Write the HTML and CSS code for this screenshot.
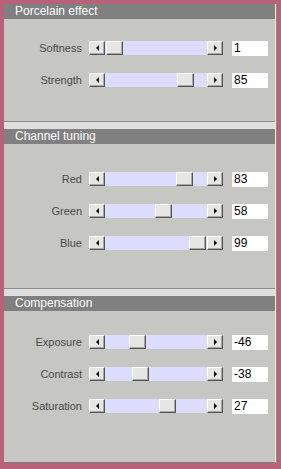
FILE: index.html
```html
<!DOCTYPE html>
<html lang="en">
<head>
    <meta charset="UTF-8">
    <meta name="viewport" content="width=device-width, initial-scale=1.0">
    <title>Porcelain Settings</title>
    <link rel="stylesheet" href="styles.css">
</head>
<body>
    <div class="panel">
        <div class="section first">
            <div class="section-head">Porcelain effect</div>
            <div class="section-body">
                <div class="row">
                    <span class="label">Softness</span>
                    <div class="slider">
                        <span class="btn btn-left"><i></i></span>
                        <span class="track"><span class="thumb" style="left: 1px"></span></span>
                        <span class="btn btn-right"><i></i></span>
                    </div>
                    <input class="value" type="text" value="1">
                </div>
                <div class="row">
                    <span class="label">Strength</span>
                    <div class="slider">
                        <span class="btn btn-left"><i></i></span>
                        <span class="track"><span class="thumb" style="left: 72px"></span></span>
                        <span class="btn btn-right"><i></i></span>
                    </div>
                    <input class="value" type="text" value="85">
                </div>
            </div>
        </div>

        <div class="section second">
            <div class="section-head">Channel tuning</div>
            <div class="section-body">
                <div class="row">
                    <span class="label">Red</span>
                    <div class="slider">
                        <span class="btn btn-left"><i></i></span>
                        <span class="track"><span class="thumb" style="left: 71px"></span></span>
                        <span class="btn btn-right"><i></i></span>
                    </div>
                    <input class="value" type="text" value="83">
                </div>
                <div class="row">
                    <span class="label">Green</span>
                    <div class="slider">
                        <span class="btn btn-left"><i></i></span>
                        <span class="track"><span class="thumb" style="left: 50px"></span></span>
                        <span class="btn btn-right"><i></i></span>
                    </div>
                    <input class="value" type="text" value="58">
                </div>
                <div class="row">
                    <span class="label">Blue</span>
                    <div class="slider">
                        <span class="btn btn-left"><i></i></span>
                        <span class="track"><span class="thumb" style="left: 84px"></span></span>
                        <span class="btn btn-right"><i></i></span>
                    </div>
                    <input class="value" type="text" value="99">
                </div>
            </div>
        </div>

        <div class="section third">
            <div class="section-head">Compensation</div>
            <div class="section-body">
                <div class="row">
                    <span class="label">Exposure</span>
                    <div class="slider">
                        <span class="btn btn-left"><i></i></span>
                        <span class="track"><span class="thumb" style="left: 24px"></span></span>
                        <span class="btn btn-right"><i></i></span>
                    </div>
                    <input class="value" type="text" value="-46">
                </div>
                <div class="row">
                    <span class="label">Contrast</span>
                    <div class="slider">
                        <span class="btn btn-left"><i></i></span>
                        <span class="track"><span class="thumb" style="left: 27px"></span></span>
                        <span class="btn btn-right"><i></i></span>
                    </div>
                    <input class="value" type="text" value="-38">
                </div>
                <div class="row">
                    <span class="label">Saturation</span>
                    <div class="slider">
                        <span class="btn btn-left"><i></i></span>
                        <span class="track"><span class="thumb" style="left: 54px"></span></span>
                        <span class="btn btn-right"><i></i></span>
                    </div>
                    <input class="value" type="text" value="27">
                </div>
            </div>
        </div>
    </div>
</body>
</html>
```

FILE: styles.css
```css
/* settings panel on a pink frame */
body {
    margin: 0;
    padding: 4px 5px 6px 4px;
    background-color: #b8627a;
    font-family: "Liberation Sans", Arial, sans-serif;
}

.panel {
    box-sizing: border-box;
    width: 272px;
    height: 459px;
    background-color: #c6c6c2;
    border-right: 1px solid #e4ece4;
    border-bottom: 1px solid #7c7c7c;
    box-shadow: 1px 0 0 #8a8a8a;
    display: flex;
    flex-direction: column;
}

.section-head {
    height: 15px;
    line-height: 15px;
    background-color: #808080;
    color: #fff;
    font-size: 12px;
    padding-left: 11px;
}

.second,
.third {
    border-top: 1px solid #8c8c8c;
    padding-top: 7px;
    background-color: #dedede;
}

.section-body {
    background-color: #c6c6c2;
    display: flex;
    flex-direction: column;
    gap: 17px;
}

.first .section-body {
    padding: 22px 0 33px;
}

.second .section-body {
    padding: 28px 0 37px;
}

.third .section-body {
    flex: 1;
    padding-top: 24px;
}

.third {
    flex: 1;
    display: flex;
    flex-direction: column;
}

.row {
    display: flex;
    align-items: flex-start;
    height: 15px;
}

.label {
    width: 78px;
    text-align: right;
    font-size: 11px;
    line-height: 15px;
    color: #4a4a4a;
    margin-right: 7px;
}

.slider {
    display: flex;
    width: 134px;
    height: 14px;
    margin-right: 9px;
}

.btn,
.thumb {
    box-sizing: border-box;
    height: 14px;
    background-color: #e6e6e2;
    border: 1px solid;
    border-color: #fff #555 #555 #fff;
    box-shadow: inset -1px -1px 0 #a8a8a8;
}

.btn {
    width: 16px;
    display: flex;
    align-items: center;
    justify-content: center;
}

.btn i {
    width: 0;
    height: 0;
    border-top: 3px solid transparent;
    border-bottom: 3px solid transparent;
}

.btn-left i {
    border-right: 3px solid #000;
}

.btn-right i {
    border-left: 3px solid #000;
}

.track {
    position: relative;
    width: 102px;
    height: 14px;
    background-color: #dcdcfc;
}

.thumb {
    position: absolute;
    top: 0;
    width: 17px;
}

.value {
    box-sizing: border-box;
    width: 36px;
    height: 15px;
    border: none;
    margin: 0;
    padding: 0 0 0 2px;
    background-color: #fff;
    font-family: "Liberation Sans", Arial, sans-serif;
    font-size: 12px;
    line-height: 15px;
    color: #000;
}
```
